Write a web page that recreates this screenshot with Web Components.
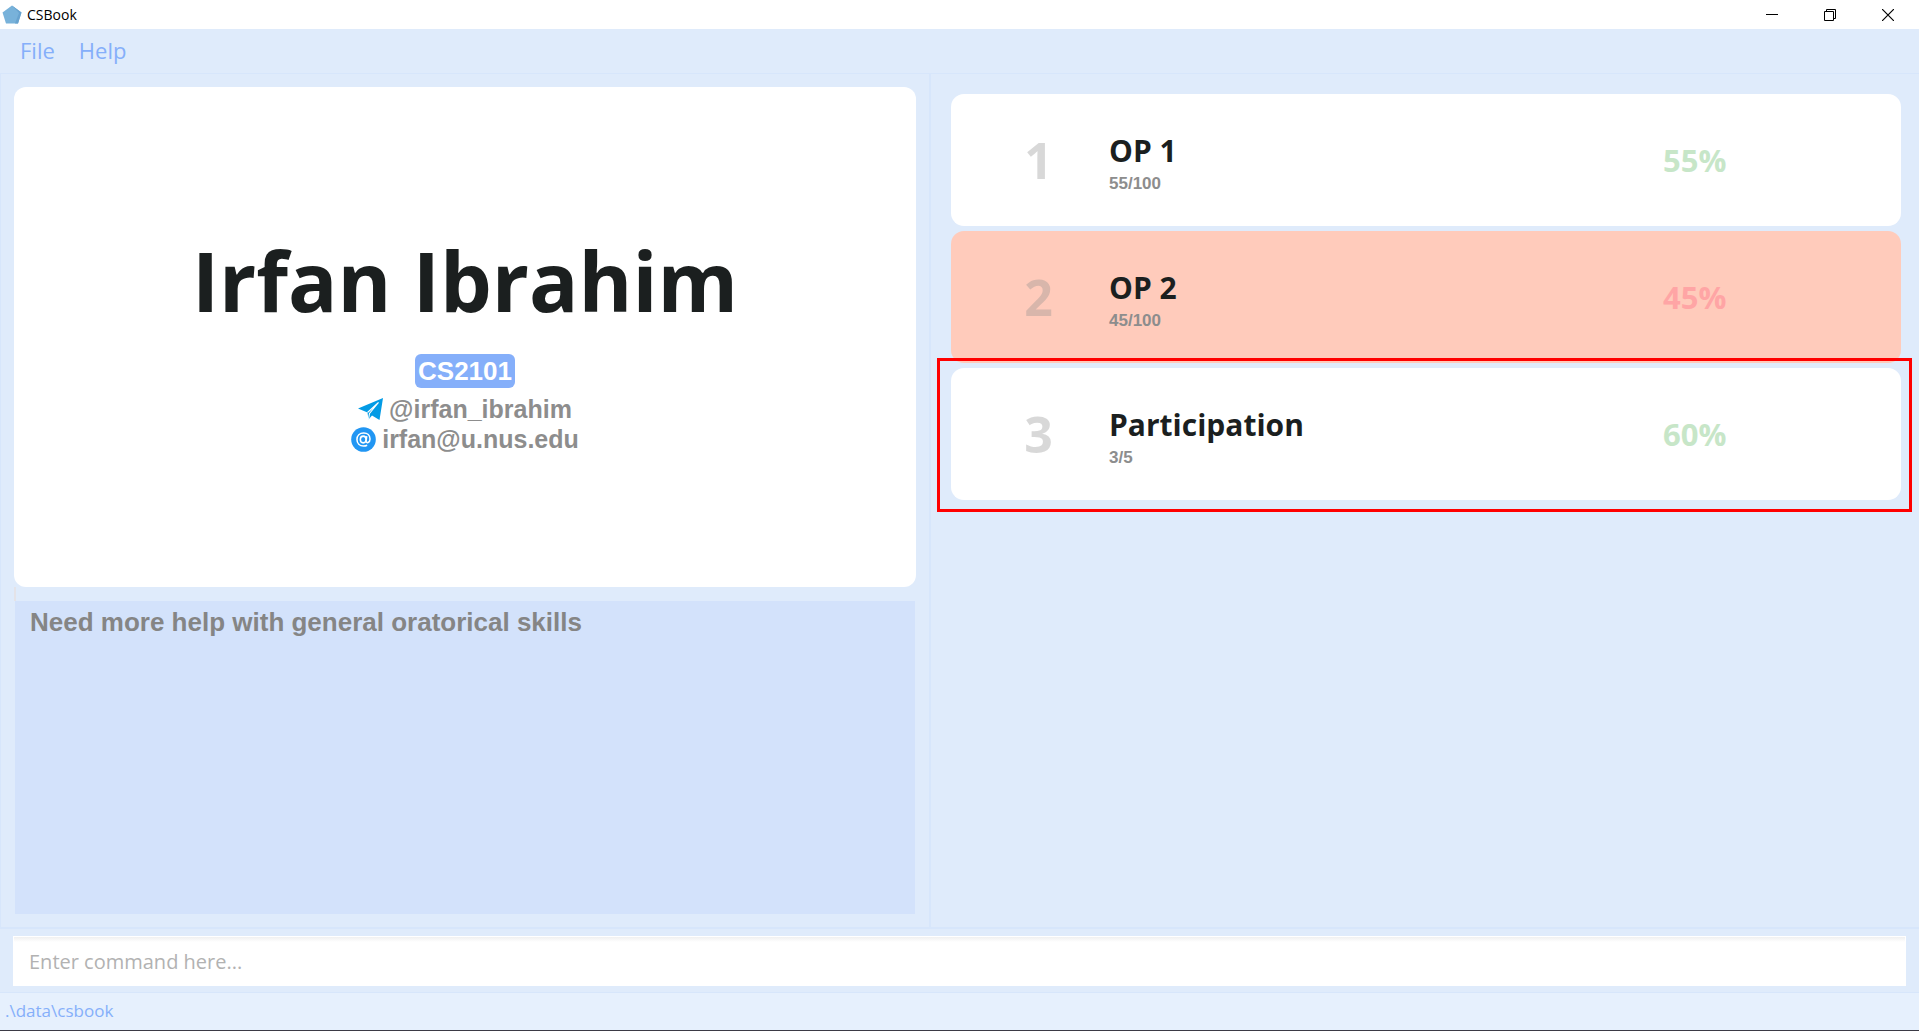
<!DOCTYPE html>
<html lang="en">
<head>
<meta charset="utf-8">
<title>CSBook</title>
<style>
html, body { height: 100%; }
body {
  margin: 0;
  --ui: "Open Sans", "Noto Sans", sans-serif;
  --round: "Liberation Sans", Arial, sans-serif;
  --panel: #dfebfb;
  --line: #d7e6fb;
  --accent: #85affa;
  --ink: #1b1f1f;
  --muted: #8d8d8d;
  font-family: var(--ui);
}
</style>
</head>
<body>
<cs-app></cs-app>
<script>
const define = (name, html) => {
  const template = document.createElement("template");
  template.innerHTML = "<style>*{box-sizing:border-box}:host{box-sizing:border-box}button{font:inherit;color:inherit;background:none;border:0;padding:0}</style>" + html;
  customElements.define(name, class extends HTMLElement {
    constructor() {
      super();
      this.attachShadow({ mode: "open" }).append(template.content.cloneNode(true));
    }
  });
};

define("cs-title-bar", `
<style>
:host { display: flex; align-items: center; justify-content: space-between; height: 29px; padding: 0 2px; background: #fff; color: #000; font-size: 14px; }
.name { display: flex; align-items: center; gap: 5px; }
.buttons { display: flex; }
button { width: 58px; height: 28px; display: grid; place-items: center; }
svg { display: block; }
</style>
<div class="name">
  <svg width="20" height="20" viewBox="0 0 20 20" aria-hidden="true"><path d="M10 0.5 19.5 7.5 16 18.5H4L0.5 7.5Z" fill="#78b2da"/><path d="M10 0.5 19.5 7.5 16 18.5H13L17 8Z" fill="#68a3cf"/></svg>
  <span><slot></slot></span>
</div>
<div class="buttons">
  <button aria-label="Minimise"><svg width="12" height="12" viewBox="0 0 12 12"><path d="M0 5.5H12" stroke="#000"/></svg></button>
  <button aria-label="Restore"><svg width="12" height="12" viewBox="0 0 12 12" fill="none" stroke="#000"><path d="M.5 2.5H9.5V11.500H.5ZM2.500 2.500V.5H11.500V9.500H9.500"/></svg></button>
  <button aria-label="Close"><svg width="12" height="12" viewBox="0 0 12 12"><path d="M0 0 12 12M12 0 0 12" stroke="#000" stroke-width="1.200"/></svg></button>
</div>`);

define("cs-menu-bar", `
<style>
:host { display: flex; gap: 24px; height: 45px; padding: 0 20px; align-items: flex-start; border-bottom: 1px solid var(--line); color: var(--accent); font-size: 22px; line-height: 42px; }
</style>
<button>File</button><button>Help</button>`);

define("cs-student-card", `
<style>
:host { display: flex; flex-direction: column; align-items: center; justify-content: center; background: #fff; border-radius: 12px; font: bold 26px/30px var(--round); color: var(--muted); }
h1 { margin: 0 0 14px; font: bold 82px/120px var(--ui); color: var(--ink); }
.tag { height: 34px; line-height: 34px; padding: 0 3px; border-radius: 6px; background: var(--accent); color: #fff; margin-bottom: 6px; }
.row { display: flex; align-items: center; gap: 6px; font-size: 25px; }
svg { display: block; }
</style>
<h1><slot name="name"></slot></h1>
<div class="tag"><slot name="module"></slot></div>
<div class="row">
  <svg width="25" height="22" viewBox="0 0 25 22" aria-hidden="true"><path d="M0 10.500 25 0 21.500 22 14 17.500 10.500 21.500 9.500 14.500Z" fill="#039be5"/><path d="M9.500 14.500 20.500 4.500 11.500 15.500 10.500 21.500" fill="none" stroke="#fff" stroke-width="1.100"/></svg>
  <slot name="telegram"></slot>
</div>
<div class="row">
  <svg width="25" height="25" viewBox="0 0 26 26" aria-hidden="true"><circle cx="13" cy="13" r="12.800" fill="#2196f3"/><g fill="none" stroke="#fff" stroke-width="1.600"><ellipse cx="12.700" cy="13" rx="3" ry="3.500"/><path d="M16.300 9.500 15.700 14.500C15.700 17.500 19.800 16.500 19.800 12.500C19.800 8.500 17 6.200 13.200 6.200C9 6.200 6.200 9 6.200 13C6.200 17.200 9 19.800 13 19.800C14.500 19.800 15.800 19.500 16.800 19"/></g></svg>
  <slot name="email"></slot>
</div>`);

define("cs-notes", `
<style>
:host { display: block; margin: 0 1px; background: #d3e2fb; padding: 7px 15px; font: bold 26px/29px var(--round); color: #858585; }
p { margin: 0; }
</style>
<p><slot></slot></p>`);

define("cs-score-card", `
<style>
:host { display: grid; position: relative; min-height: 132px; border-radius: 13px; background: #fff; color: var(--ink); align-items: center; }
:host([failed]) { background: #ffcbbb; }
:host([marked])::after { content: ""; position: absolute; inset: -10px -11px -12px -14px; border: 3px solid #f00; }
.row { display: grid; grid-template-columns: 158px minmax(0, 1fr) 238px; align-items: center; }
.index { text-align: center; padding-left: 17px; font-weight: bold; font-size: 50px; line-height: 68px; opacity: .33; color: #8c8c8c; }
.text { padding-top: 3px; }
h2 { margin: 0; font-size: 30px; line-height: 44px; font-weight: bold; }
.score { font: bold 17px/22px var(--round); color: var(--muted); }
.percent { font-weight: bold; font-size: 31px; line-height: 44px; color: #c7e6c8; }
:host([failed]) .percent { color: #ffa5a5; }
</style>
<div class="row">
  <div class="index"><slot name="index"></slot></div>
  <div class="text"><h2><slot name="title"></slot></h2><div class="score"><slot name="score"></slot></div></div>
  <div class="percent"><slot name="percent"></slot></div>
</div>`);

define("cs-command-box", `
<style>
:host { display: block; padding: 7px 13px 6px; border-top: 2px solid var(--line); border-bottom: 1px solid var(--line); }
input { display: block; width: 100%; height: 50px; border: 1px solid #fff; border-radius: 0; padding: 0 15px; background: linear-gradient(#f0f0f0, #fff 5px); font: 20px/28px var(--ui); color: #333; outline: none; }
input::placeholder { color: #b2b2b2; opacity: 1; }
</style>
<input type="text" aria-label="Command" placeholder="Enter command here...">`);

define("cs-status-bar", `
<style>
:host { display: block; height: 38px; padding: 0 5px; background: #e6f0fd; border-bottom: 1px solid #3b3a45; color: var(--accent); font-size: 17px; line-height: 36px; }
</style>
<slot></slot>`);

define("cs-app", `
<style>
:host { display: flex; flex-direction: column; min-height: 100vh; background: var(--panel); }
main { flex: 1; display: grid; grid-template-columns: minmax(0, 929fr) minmax(0, 990fr); }
.student { display: grid; grid-template-rows: 500fr 14px 313fr; padding: 13px; border-left: 1px solid var(--line); }
.divider { border-left: 2px solid #e4e3e8; }
.scores { display: flex; flex-direction: column; gap: 5px; padding: 20px 18px 20px 20px; border-left: 2px solid var(--line); }
</style>
<cs-title-bar>CSBook</cs-title-bar>
<cs-menu-bar></cs-menu-bar>
<main>
  <section class="student">
    <cs-student-card>
      <span slot="name">Irfan Ibrahim</span>
      <span slot="module">CS2101</span>
      <span slot="telegram">@irfan_ibrahim</span>
      <span slot="email">irfan@u.nus.edu</span>
    </cs-student-card>
    <div class="divider"></div>
    <cs-notes>Need more help with general oratorical skills</cs-notes>
  </section>
  <section class="scores">
    <cs-score-card>
      <span slot="index">1</span><span slot="title">OP 1</span><span slot="score">55/100</span><span slot="percent">55%</span>
    </cs-score-card>
    <cs-score-card failed>
      <span slot="index">2</span><span slot="title">OP 2</span><span slot="score">45/100</span><span slot="percent">45%</span>
    </cs-score-card>
    <cs-score-card marked>
      <span slot="index">3</span><span slot="title">Participation</span><span slot="score">3/5</span><span slot="percent">60%</span>
    </cs-score-card>
  </section>
</main>
<cs-command-box></cs-command-box>
<cs-status-bar>.\\data\\csbook</cs-status-bar>`);
</script>
</body>
</html>
